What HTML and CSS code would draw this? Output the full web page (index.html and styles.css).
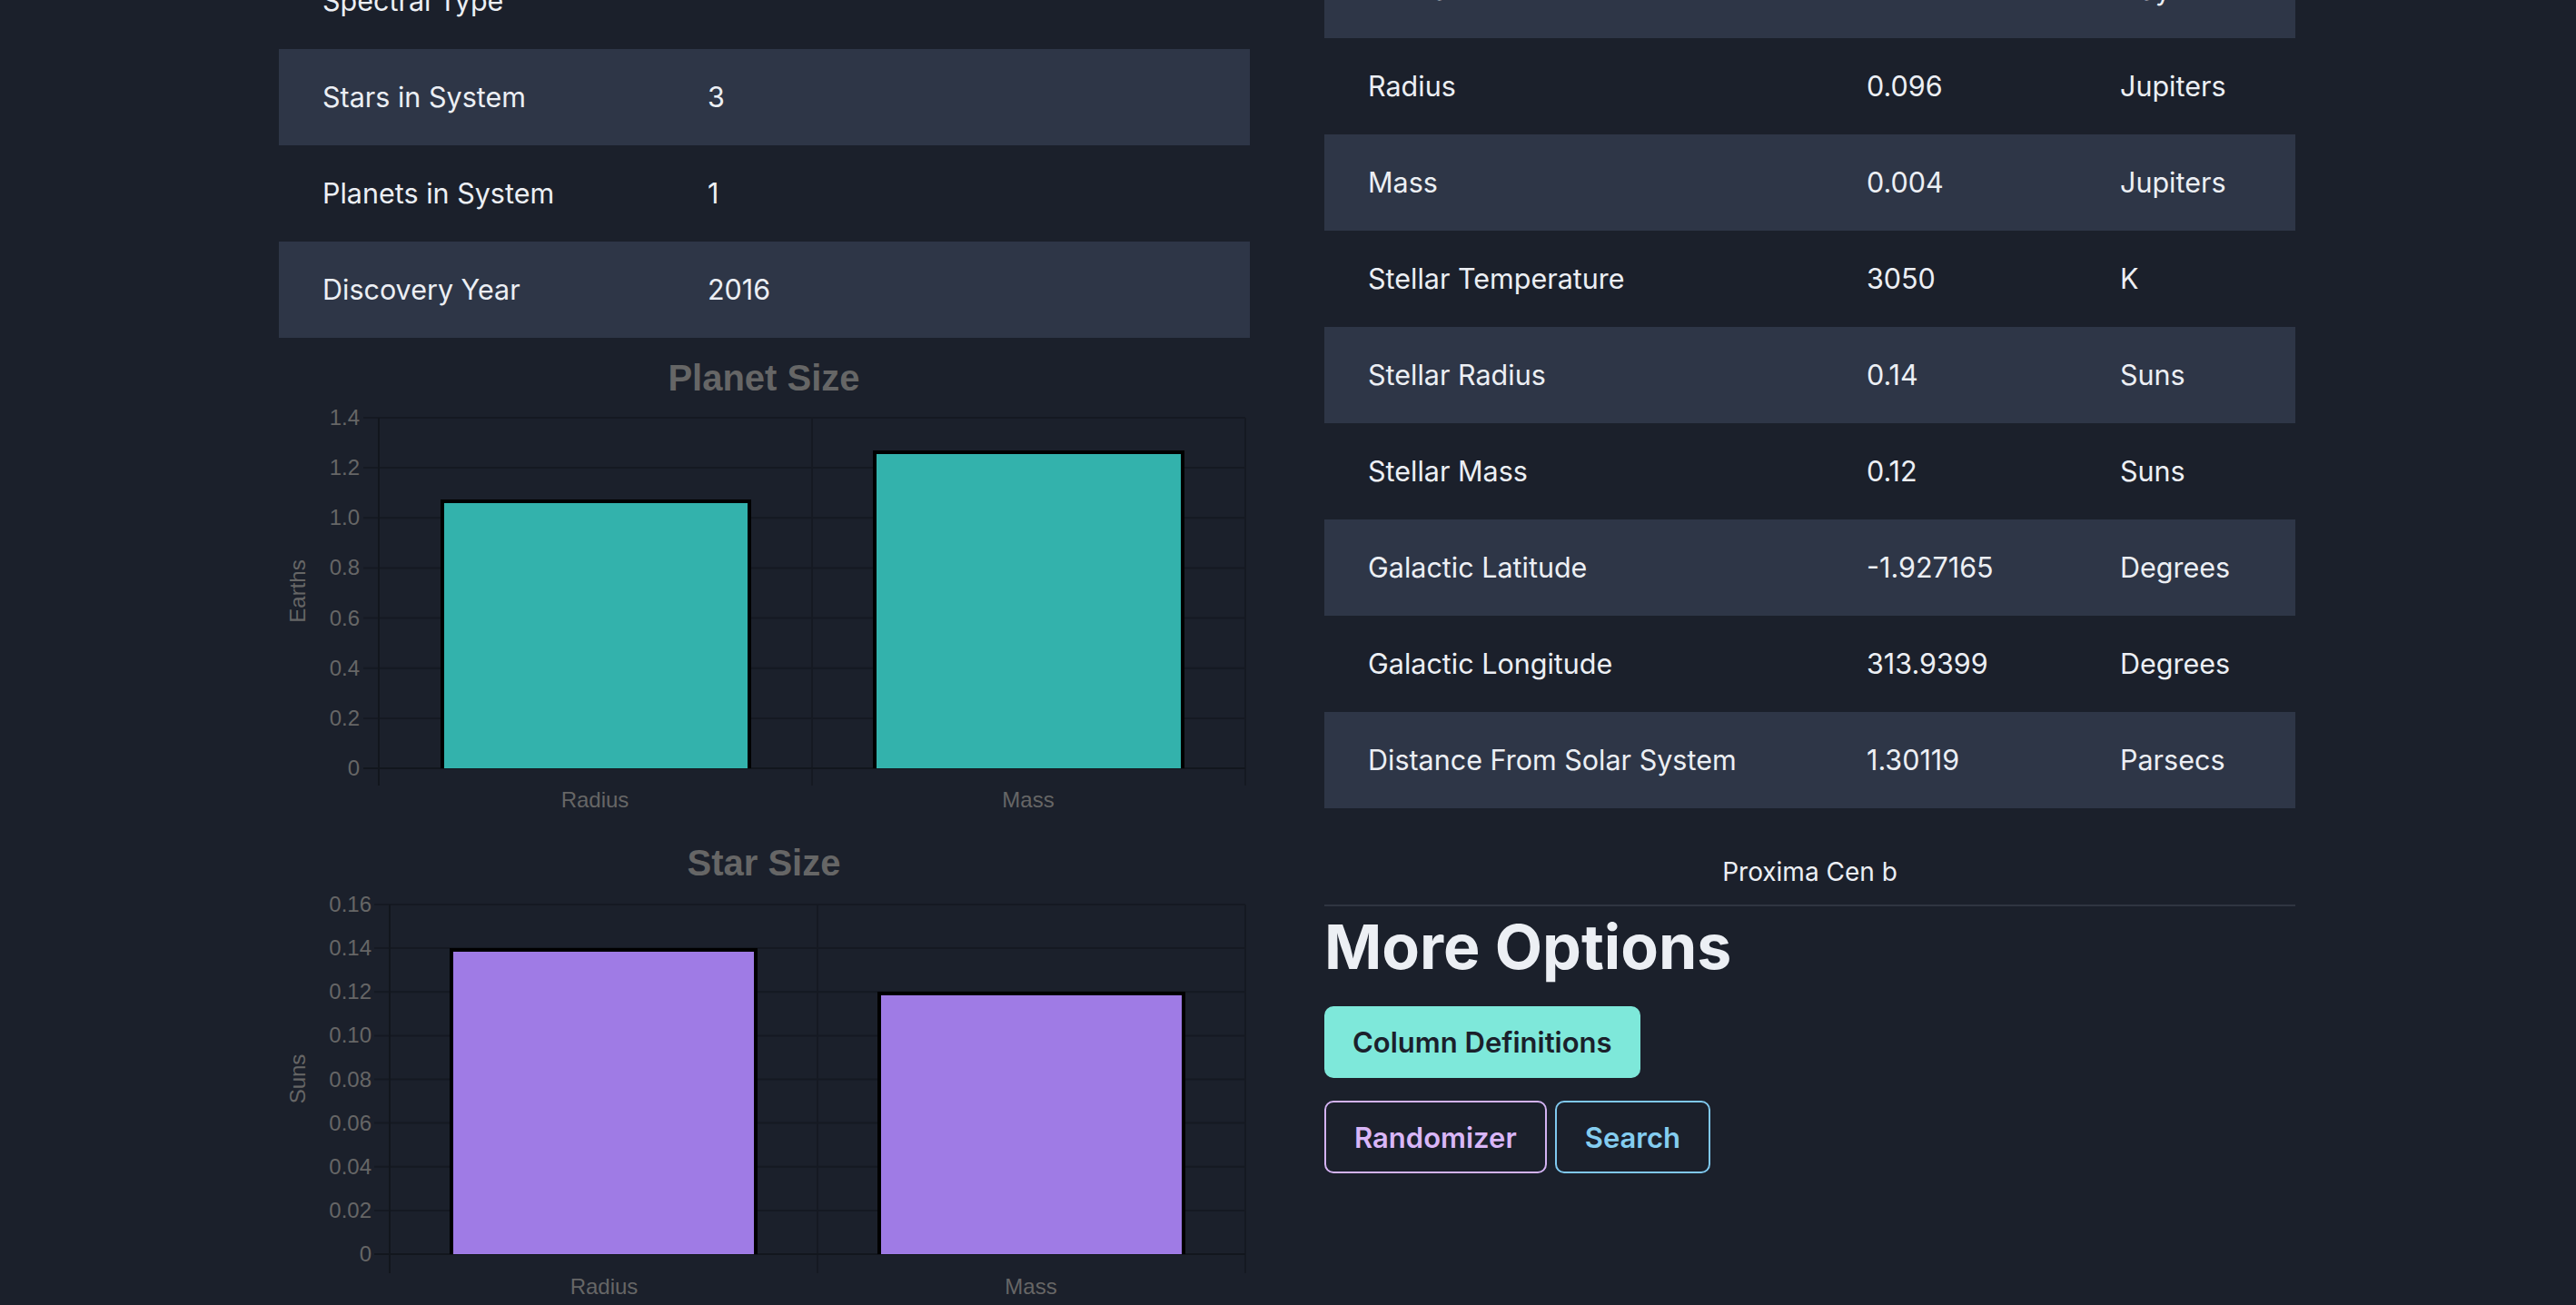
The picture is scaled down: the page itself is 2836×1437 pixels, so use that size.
FILE: index.html
```html
<!DOCTYPE html>
<html lang="en">
<head>
<meta charset="utf-8">
<title>Proxima Cen b</title>
<link rel="stylesheet" href="styles.css">
</head>
<body>
<main class="page">
  <section class="col col-left">
    <table class="data two">
      <colgroup><col class="c-label"><col></colgroup>
      <tbody>
        <tr><td>Spectral Type</td><td></td></tr>
        <tr><td>Stars in System</td><td>3</td></tr>
        <tr><td>Planets in System</td><td>1</td></tr>
        <tr><td>Discovery Year</td><td>2016</td></tr>
      </tbody>
    </table>

    <svg class="chart chart-planet" width="1069" height="533" viewBox="0 0 1069 533">
      <text class="c-title" x="534" y="58" text-anchor="middle">Planet Size</text>
      <g class="grid">
        <line x1="93" y1="88" x2="1064" y2="88"/>
        <line x1="93" y1="143.1" x2="1064" y2="143.1"/>
        <line x1="93" y1="198.3" x2="1064" y2="198.3"/>
        <line x1="93" y1="253.4" x2="1064" y2="253.4"/>
        <line x1="93" y1="308.6" x2="1064" y2="308.6"/>
        <line x1="93" y1="363.7" x2="1064" y2="363.7"/>
        <line x1="93" y1="418.9" x2="1064" y2="418.9"/>
        <line x1="587" y1="88" x2="587" y2="493"/>
        <line x1="1064" y1="88" x2="1064" y2="493"/>
      </g>
      <g class="axis">
        <line x1="110" y1="88" x2="110" y2="493"/>
        <line x1="93" y1="474" x2="1064" y2="474"/>
      </g>
      <g class="ticks" text-anchor="end">
        <text x="89" y="96">1.4</text>
        <text x="89" y="151">1.2</text>
        <text x="89" y="206">1.0</text>
        <text x="89" y="261">0.8</text>
        <text x="89" y="317">0.6</text>
        <text x="89" y="372">0.4</text>
        <text x="89" y="427">0.2</text>
        <text x="89" y="482">0</text>
      </g>
      <text class="ticks" transform="translate(21 279) rotate(-90)" x="0" y="8" text-anchor="middle">Earths</text>
      <rect class="bar-teal" x="178" y="178" width="342" height="296"/>
      <path class="bar-edge" d="M180 474 V180 H518 V474"/>
      <rect class="bar-teal" x="654" y="124" width="343" height="350"/>
      <path class="bar-edge" d="M656 474 V126 H995 V474"/>
      <g class="ticks" text-anchor="middle">
        <text x="348" y="517">Radius</text>
        <text x="825" y="517">Mass</text>
      </g>
    </svg>

    <svg class="chart" width="1069" height="540" viewBox="0 0 1069 540">
      <text class="c-title" x="534" y="59" text-anchor="middle">Star Size</text>
      <g class="grid">
        <line x1="105" y1="91" x2="1064" y2="91"/>
        <line x1="105" y1="139.1" x2="1064" y2="139.1"/>
        <line x1="105" y1="187.25" x2="1064" y2="187.25"/>
        <line x1="105" y1="235.4" x2="1064" y2="235.4"/>
        <line x1="105" y1="283.5" x2="1064" y2="283.5"/>
        <line x1="105" y1="331.6" x2="1064" y2="331.6"/>
        <line x1="105" y1="379.75" x2="1064" y2="379.75"/>
        <line x1="105" y1="427.9" x2="1064" y2="427.9"/>
        <line x1="593" y1="91" x2="593" y2="497"/>
        <line x1="1064" y1="91" x2="1064" y2="497"/>
      </g>
      <g class="axis">
        <line x1="122" y1="91" x2="122" y2="497"/>
        <line x1="105" y1="476" x2="1064" y2="476"/>
      </g>
      <g class="ticks" text-anchor="end">
        <text x="102" y="99">0.16</text>
        <text x="102" y="147">0.14</text>
        <text x="102" y="195">0.12</text>
        <text x="102" y="243">0.10</text>
        <text x="102" y="292">0.08</text>
        <text x="102" y="340">0.06</text>
        <text x="102" y="388">0.04</text>
        <text x="102" y="436">0.02</text>
        <text x="102" y="484">0</text>
      </g>
      <text class="ticks" transform="translate(21 283) rotate(-90)" x="0" y="8" text-anchor="middle">Suns</text>
      <rect class="bar-purple" x="188" y="139" width="339" height="337"/>
      <path class="bar-edge" d="M190 476 V141 H525 V476"/>
      <rect class="bar-purple" x="659" y="187" width="339" height="289"/>
      <path class="bar-edge" d="M661 476 V189 H996 V476"/>
      <g class="ticks" text-anchor="middle">
        <text x="358" y="520">Radius</text>
        <text x="828" y="520">Mass</text>
      </g>
    </svg>
  </section>

  <section class="col col-right">
    <table class="data three">
      <colgroup><col class="c-name"><col class="c-val"><col></colgroup>
      <tbody>
        <tr><td>Orbit Semi-Major Axis</td><td>0.04857</td><td>AU</td></tr>
        <tr><td>Orbital Period</td><td>11.186</td><td>Days</td></tr>
        <tr><td>Radius</td><td>0.096</td><td>Jupiters</td></tr>
        <tr><td>Mass</td><td>0.004</td><td>Jupiters</td></tr>
        <tr><td>Stellar Temperature</td><td>3050</td><td>K</td></tr>
        <tr><td>Stellar Radius</td><td>0.14</td><td>Suns</td></tr>
        <tr><td>Stellar Mass</td><td>0.12</td><td>Suns</td></tr>
        <tr><td>Galactic Latitude</td><td>-1.927165</td><td>Degrees</td></tr>
        <tr><td>Galactic Longitude</td><td>313.9399</td><td>Degrees</td></tr>
        <tr><td>Distance From Solar System</td><td>1.30119</td><td>Parsecs</td></tr>
      </tbody>
    </table>
    <div class="caption">Proxima Cen b</div>
    <div class="divider"></div>
    <h2 class="more">More Options</h2>
    <div class="actions">
      <button class="btn btn-fill">Column Definitions</button>
    </div>
    <div class="actions">
      <button class="btn btn-outline purple">Randomizer</button>
      <button class="btn btn-outline blue">Search</button>
    </div>
  </section>
</main>
</body>
</html>
```

FILE: styles.css
```css
html, body {
  margin: 0;
  padding: 0;
  background: #1b202b;
  overflow: hidden;
}

body {
  font-family: Inter, "Noto Sans", "Liberation Sans", sans-serif;
  color: #eceff4;
}

.page {
  display: grid;
  grid-template-columns: 1069px 1069px;
  column-gap: 82px;
  margin-left: 307px;
  align-items: start;
}

.col {
  display: flex;
  flex-direction: column;
}

.col-left { margin-top: -52px; }
.col-right { margin-top: -170px; }

.data {
  width: 1069px;
  border-collapse: collapse;
  table-layout: fixed;
  font-size: 30.5px;
}

.data td {
  padding: 0 48px;
  height: 106px;
  line-height: 42px;
  white-space: nowrap;
  box-sizing: border-box;
}

.data tr:nth-child(even) td {
  background: #2e3647;
}

.two .c-label { width: 424px; }
.three .c-name { width: 549px; }
.three .c-val { width: 279px; }

.chart {
  display: block;
  font-family: "Liberation Sans", Arial, sans-serif;
}

.c-title {
  font-size: 40px;
  font-weight: 700;
  fill: #666666;
}

.ticks {
  font-size: 24px;
  fill: #666666;
}

.grid line {
  stroke: #151922;
  stroke-width: 2;
}

.axis line {
  stroke: #12161d;
  stroke-width: 2;
}

.bar-teal { fill: #33b2ac; }
.bar-purple { fill: #9f7be5; }

.bar-edge {
  fill: none;
  stroke: #000000;
  stroke-width: 4;
}

.caption {
  font-size: 28px;
  line-height: 42px;
  text-align: center;
  padding: 49px 0 15px;
}

.divider {
  height: 2px;
  background: #2f3541;
}

.more {
  margin: 2px 0 0;
  font-size: 68px;
  line-height: 84px;
  font-weight: 700;
  color: #eceff4;
}

.actions {
  display: flex;
  gap: 9px;
  margin-top: 24px;
}

.actions + .actions { margin-top: 25px; }

.btn {
  font-family: Inter, "Noto Sans", sans-serif;
  font-size: 31px;
  font-weight: 600;
  height: 80px;
  padding: 0 31px;
  border-radius: 10px;
  box-sizing: border-box;
  cursor: pointer;
}

.btn-fill {
  background: #7ee8da;
  color: #1b202b;
  border: none;
  height: 79px;
}

.btn-outline {
  background: transparent;
  border: 2px solid currentColor;
}

.btn-outline.purple {
  color: #d9b6f7;
  border-color: #d3b2f2;
}

.btn-outline.blue {
  color: #84cdf0;
  border-color: #7fc8ee;
}
```
